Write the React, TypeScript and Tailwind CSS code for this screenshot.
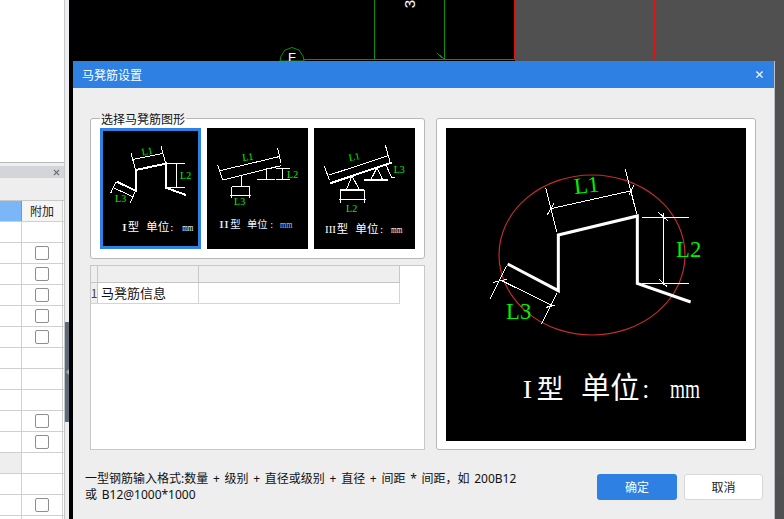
import { X } from "lucide-react";

const SERIF = "'Liberation Serif','Noto Sans CJK SC',serif";
const GREEN = "#00f000";

type L = [number, number, number, number];

function Lines({ items, w = 3 }: { items: L[]; w?: number }) {
  return (
    <g stroke="#fff" strokeWidth={w} shapeRendering="crispEdges" fill="none">
      {items.map((l, i) => (
        <line key={i} x1={l[0]} y1={l[1]} x2={l[2]} y2={l[3]} />
      ))}
    </g>
  );
}

function Label({ x, y, t, size = 30, r = 0 }: { x: number; y: number; t: string; size?: number; r?: number }) {
  return (
    <text
      x={x}
      y={y}
      fill={GREEN}
      fontSize={size}
      textAnchor="middle"
      fontFamily={SERIF}
      transform={r ? `rotate(${r} ${x} ${y})` : undefined}
    >
      {t}
    </text>
  );
}

function Caption({
  parts,
  y,
  size,
  fill = "#fff",
}: {
  parts: { x: number; t: string; len?: number; s?: number; f?: string }[];
  y: number;
  size: number;
  fill?: string;
}) {
  return (
    <g fontFamily={SERIF} fontSize={size} fill={fill}>
      {parts.map((p, i) => (
        <text
          key={i}
          x={p.x}
          y={y}
          fontSize={p.s}
          fill={p.f}
          textLength={p.len}
          lengthAdjust={p.len ? "spacingAndGlyphs" : undefined}
        >
          {p.t}
        </text>
      ))}
    </g>
  );
}

function ThumbOne() {
  return (
    <svg viewBox="24 18 285 345" className="block w-[95px] h-[115px]">
      <rect x="24" y="18" width="285" height="345" fill="#000" />
      <polyline
        points="65,170 122,197 122,135 212,116 212,188 273,210"
        fill="none"
        stroke="#fff"
        strokeWidth="6"
        shapeRendering="crispEdges"
      />
      <Lines
        items={[
          [115, 103, 205, 85],
          [108, 85, 122, 135],
          [198, 63, 212, 116],
          [217, 115, 270, 115],
          [217, 188, 270, 188],
          [243, 115, 243, 188],
          [62, 172, 47, 205],
          [122, 197, 105, 235],
          [55, 188, 113, 215],
        ]}
      />
      <Label x={158} y={89} t="L1" r={-10} />
      <Label x={272} y={161} t="L2" />
      <Label x={77} y={231} t="L3" />
      <Caption
        y={318}
        size={34}
        parts={[
          { x: 80, t: "I", s: 32, len: 16 },
          { x: 98, t: "型", s: 34 },
          { x: 153, t: "单位", s: 35 },
          { x: 226, t: ":", s: 34 },
          { x: 262, t: "mm", s: 28, len: 33 },
        ]}
      />
    </svg>
  );
}

function ThumbTwo() {
  return (
    <svg viewBox="6 9 303 363" className="block w-[101px] h-[121px]">
      <rect x="6" y="9" width="303" height="363" fill="#000" />
      <Lines
        items={[
          [45, 137, 222, 95],
          [53, 165, 228, 122],
          [38, 120, 53, 165],
          [218, 70, 228, 115],
          [110, 150, 110, 185],
          [80, 185, 135, 185],
          [80, 185, 80, 220],
          [133, 185, 133, 220],
          [75, 212, 138, 212],
          [185, 128, 185, 163],
          [155, 163, 210, 163],
          [212, 130, 255, 130],
          [212, 163, 255, 163],
          [233, 130, 233, 163],
        ]}
      />
      <Label x={130} y={106} t="L1" r={-8} />
      <Label x={263} y={159} t="L2" />
      <Label x={104} y={240} t="L3" />
      <Caption
        y={308}
        size={31}
        fill="#e4f2ff"
        parts={[
          { x: 42, t: "II", len: 30 },
          { x: 76, t: "型" },
          { x: 126, t: "单位" },
          { x: 196, t: ":" },
          { x: 225, t: "mm", s: 32, len: 37, f: "#8fd0ff" },
        ]}
      />
    </svg>
  );
}

function ThumbThree() {
  return (
    <svg viewBox="42 39 303 363" className="block w-[101px] h-[121px]">
      <rect x="42" y="39" width="303" height="363" fill="#000" />
      <line x1="90" y1="205" x2="275" y2="143" stroke="#fff" strokeWidth="6" shapeRendering="crispEdges" />
      <line x1="120" y1="224" x2="193" y2="224" stroke="#fff" strokeWidth="5" shapeRendering="crispEdges" />
      <line x1="192" y1="195" x2="264" y2="195" stroke="#fff" strokeWidth="5" shapeRendering="crispEdges" />
      <Lines
        items={[
          [88, 180, 265, 122],
          [73, 153, 88, 195],
          [256, 90, 270, 140],
          [155, 185, 140, 222],
          [157, 185, 177, 222],
          [122, 224, 122, 265],
          [193, 224, 193, 265],
          [118, 253, 197, 253],
          [230, 160, 212, 195],
          [232, 160, 248, 195],
          [258, 150, 275, 188],
          [275, 188, 285, 188],
        ]}
      />
      <Label x={165} y={135} t="L1" r={-12} />
      <Label x={298} y={174} t="L3" />
      <Label x={155} y={291} t="L2" />
      <Caption
        y={353}
        size={34}
        parts={[
          { x: 75, t: "III", len: 33 },
          { x: 110, t: "型" },
          { x: 166, t: "单位", s: 35 },
          { x: 240, t: ":" },
          { x: 273, t: "mm", s: 34, len: 34 },
        ]}
      />
    </svg>
  );
}

function MainDrawing() {
  return (
    <svg viewBox="18 24 900 939" className="block w-[300px] h-[313px]">
      <rect x="18" y="24" width="900" height="939" fill="#000" />
      <ellipse cx="456" cy="405" rx="279" ry="240" fill="none" stroke="#c42c2c" strokeWidth="3.5" />
      <polyline
        points="203,432 355,512 355,345 592,288 592,490 752,546"
        fill="none"
        stroke="#fff"
        strokeWidth="9"
      />
      <Lines
        items={[
          [333, 266, 576, 212],
          [317, 203, 350, 335],
          [556, 147, 590, 282],
          [322, 284, 342, 250],
          [566, 226, 582, 196],
          [606, 292, 746, 292],
          [606, 490, 746, 490],
          [669, 280, 669, 495],
          [655, 277, 683, 302],
          [657, 477, 681, 500],
          [200, 437, 150, 536],
          [352, 518, 304, 613],
          [185, 482, 340, 558],
          [160, 487, 200, 478],
          [318, 562, 345, 556],
        ]}
      />
      <Label x={442} y={218} t="L1" size={68} r={-6} />
      <Label x={746} y={412} t="L2" size={68} />
      <Label x={236} y={598} t="L3" size={68} />
      <Caption
        y={834}
        size={80}
        fill="#fdfdfd"
        parts={[
          { x: 248, t: "I", s: 76, len: 28 },
          { x: 290, t: "型" },
          { x: 423, t: "单位", s: 88 },
          { x: 602, t: "：", s: 60 },
          { x: 690, t: "mm", s: 84, len: 90 },
        ]}
      />
    </svg>
  );
}

function CanvasBackdrop() {
  return (
    <svg viewBox="69 0 715 519" className="block w-[715px] h-[519px]">
      <rect x="69" y="0" width="715" height="519" fill="#000" />
      <rect x="515" y="0" width="269" height="519" fill="#505050" />
      <g stroke="#0a900a" strokeWidth="1" fill="none" shapeRendering="crispEdges">
        <line x1="374.5" y1="0" x2="374.5" y2="60" />
        <line x1="444.5" y1="0" x2="444.5" y2="60" />
        <line x1="304" y1="59.5" x2="515" y2="59.5" />
        <line x1="437" y1="53" x2="445" y2="60" />
      </g>
      <polygon
        points="292,47.5 299,50 303,56 304,61 280,61 281,56 285,50"
        fill="none"
        stroke="#0a900a"
        strokeWidth="1"
      />
      <text x="292" y="62" textAnchor="middle" fill="#fff" fontSize="13" fontFamily="'Liberation Sans',sans-serif">
        F
      </text>
      <text
        x="410"
        y="4"
        textAnchor="middle"
        fill="#fff"
        fontSize="15"
        fontFamily="'Liberation Sans',sans-serif"
        transform="rotate(-90 410 4) translate(0 5)"
      >
        3
      </text>
      <g stroke="#e01010" strokeWidth="1" shapeRendering="crispEdges">
        <line x1="514.5" y1="0" x2="514.5" y2="60" />
        <line x1="654.5" y1="0" x2="654.5" y2="60" />
        <line x1="515" y1="59.5" x2="784" y2="59.5" />
        <line x1="775" y1="479.5" x2="784" y2="479.5" />
      </g>
    </svg>
  );
}

const CHECK_ROWS = [false, true, true, true, true, true, false, false, false, true, true, false, false, true, false];

function SidePanel() {
  return (
    <div className="w-[65px] h-full shrink-0 bg-white border-r border-[#c4c6cb] flex flex-col overflow-hidden">
      <div className="h-[163px] bg-white border-b border-[#b9b9b9] shrink-0" />
      <div className="h-[3px] bg-[#eeeeee] shrink-0" />
      <div className="h-[12px] bg-[#d3d5da] flex items-center justify-end pr-[3px] shrink-0">
        <X size={9} strokeWidth={3} color="#6d6f73" />
      </div>
      <div className="h-[23px] bg-[#eeeeee] border-b border-[#c8c8c8] shrink-0" />
      <div className="h-[21px] flex border-b border-[#d0d0d0] shrink-0">
        <div className="w-[22px] bg-[#7ab6f8] border-r border-[#5d9fe6]" />
        <div className="w-[41px] bg-[#f5f5f5] border-r border-[#d0d0d0] flex items-center justify-center text-[12px] text-[#222]">
          附加
        </div>
      </div>
      {CHECK_ROWS.map((c, i) => (
        <div key={i} className="h-[21px] flex border-b border-[#d0d0d0] shrink-0">
          <div className={`w-[22px] border-r border-[#d0d0d0] ${i === 11 ? "bg-[#eeeeee]" : "bg-white"}`} />
          <div className="w-[41px] border-r border-[#d0d0d0] flex items-center justify-center bg-white">
            {c && <div className="w-[14px] h-[14px] rounded-[2px] border border-[#8e8e8e] bg-white" />}
          </div>
        </div>
      ))}
    </div>
  );
}

function Splitter() {
  return (
    <div className="w-[4px] h-full shrink-0 bg-[#eeeeee] pt-[322px]">
      <div className="h-[100px] bg-[#5f6b78] flex items-center justify-center">
        <svg viewBox="0 0 3 6" className="w-[3px] h-[6px]">
          <polygon points="3,0 0,3 3,6" fill="#a5adb6" />
        </svg>
      </div>
    </div>
  );
}

function MiniTable() {
  return (
    <div className="h-[185px] bg-white border border-[#c8c8c8]">
      <div className="flex h-[17px] border-b border-[#c4c4c4] w-[309px]">
        <div className="w-[7px] bg-[#efefef] border-r border-[#c8c8c8]" />
        <div className="w-[101px] bg-[#efefef] border-r border-[#c8c8c8]" />
        <div className="flex-1 bg-[#efefef] border-r border-[#c8c8c8]" />
      </div>
      <div className="flex h-[21px] border-b border-[#d4d4d4] w-[309px]">
        <div className="w-[7px] bg-[#efefef] border-r border-[#c8c8c8] flex items-center justify-center text-[12px] text-[#444]">
          1
        </div>
        <div className="w-[101px] border-r border-[#d4d4d4] pl-[3px] text-[13px] leading-[20px] text-[#111]">
          马凳筋信息
        </div>
        <div className="flex-1 border-r border-[#d4d4d4]" />
      </div>
    </div>
  );
}

function Dialog() {
  return (
    <div className="absolute left-[4px] top-[61px] w-[702px] h-[458px] bg-[#eeeeee] border-r border-[#bcc0c6] flex flex-col">
      <div className="h-[27px] bg-[#2e80e2] flex items-center justify-between pl-[9px] pr-[9px] shrink-0">
        <span className="text-[12px] text-white">马凳筋设置</span>
        <X size={11} strokeWidth={2.5} color="#fff" />
      </div>
      <div className="flex pl-[17px] pt-[30px] gap-[11px]">
        <div className="w-[335px] flex flex-col gap-[6px]">
          <div className="relative h-[141px] bg-white border border-[#b8b8b8] rounded-[3px] pl-[9px] pt-[9px] flex gap-[6px]">
            <span className="absolute left-[9px] top-[-7px] px-[1px] text-[12px] leading-[14px] text-[#111] bg-[linear-gradient(#eeeeee_50%,#ffffff_50%)]">
              选择马凳筋图形
            </span>
            <div className="border-[3px] border-[#2e80e2] bg-black w-[101px] h-[121px]">
              <ThumbOne />
            </div>
            <ThumbTwo />
            <ThumbThree />
          </div>
          <MiniTable />
        </div>
        <div className="w-[320px] h-[332px] bg-white border border-[#b8b8b8] rounded-[3px] pl-[9px] pt-[9px]">
          <MainDrawing />
        </div>
      </div>
      <div className="flex justify-between pl-[12px] pr-[11px] pt-[21px]">
        <p className="text-[12px] leading-[16px] text-[#111] whitespace-nowrap font-['Noto_Sans','Noto_Sans_CJK_SC',sans-serif] [word-spacing:1.6px]">
          一型钢筋输入格式:数量 + 级别 + 直径或级别 + 直径 + 间距 * 间距，如 200B12
          <br />
          或 B12@1000*1000
        </p>
        <div className="flex gap-[7px] pt-[3px]">
          <button className="w-[80px] h-[26px] rounded-[3px] bg-[#2e80e2] text-white text-[12px]">确定</button>
          <button className="w-[79px] h-[26px] rounded-[3px] bg-white border border-[#d8d8d8] text-[#222] text-[12px]">
            取消
          </button>
        </div>
      </div>
    </div>
  );
}

export default function App() {
  return (
    <div className="w-[784px] h-[519px] overflow-hidden flex font-['Noto_Sans_CJK_SC','Noto_Sans',sans-serif]">
      <SidePanel />
      <Splitter />
      <div className="relative flex-1 h-full">
        <CanvasBackdrop />
        <Dialog />
      </div>
    </div>
  );
}
